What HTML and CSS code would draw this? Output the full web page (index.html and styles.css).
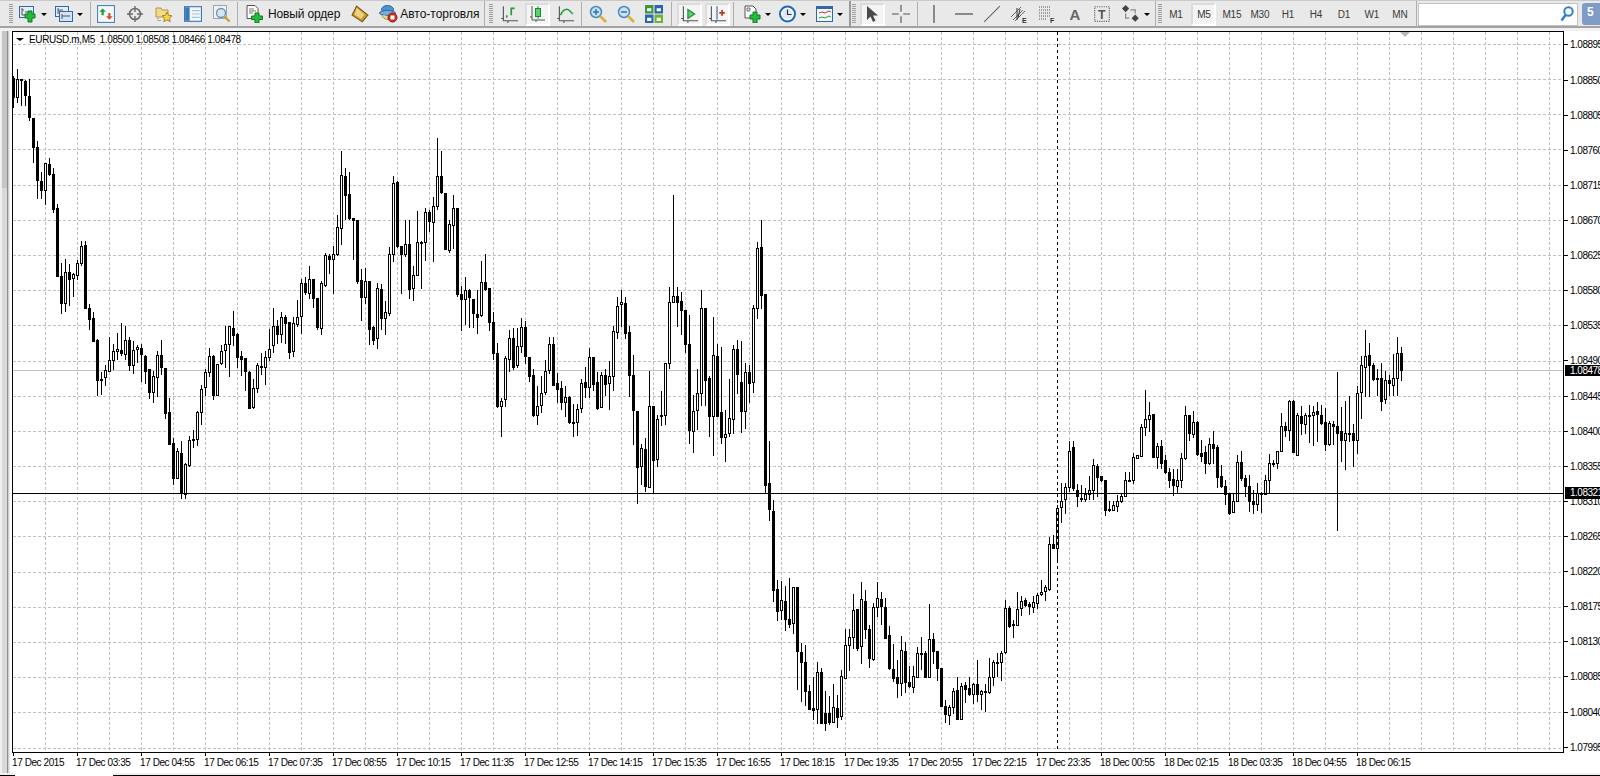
FILE: index.html
```html
<!DOCTYPE html>
<html lang="ru">
<head>
<meta charset="utf-8">
<title>EURUSD.m,M5</title>
<link rel="stylesheet" href="styles.css">
</head>
<body>
<header class="toolbar">
  <span class="grip g1"></span>
  <button class="btn split s1"><svg class="ic" viewBox="0 0 18 18"><rect x=".5" y="1.5" width="14" height="11" fill="#e3edf8" stroke="#2f6aa6"/><path d="M3 3v7h5M3 5h2M6 7h3" fill="none" stroke="#555"/><path d="M9 6h4v3h3v4h-3v4H9v-4H6V9h3z" fill="#27b83c" stroke="#0b7d22"/></svg><i class="arrow"></i></button>
  <button class="btn split s2"><svg class="ic" viewBox="0 0 18 18"><rect x=".5" y="1.5" width="13" height="10" fill="#e3edf8" stroke="#2f6aa6"/><rect x="4.5" y="6.5" width="13" height="10" fill="#d3e2f4" stroke="#2f6aa6"/><path d="M3 3v6M3 5h5M7 9v5M7 11h8" fill="none" stroke="#555"/></svg><i class="arrow"></i></button>
  <span class="sep sa"></span>
  <button class="btn b29"><svg class="ic" viewBox="0 0 16 16"><rect x=".5" y=".5" width="15" height="15" fill="#f6f9fc" stroke="#4f87bd"/><path d="M5 3l3 3H6v3H4V6H2z" fill="#1f9e35"/><path d="M11 13l-3-3h2V7h2v3h2z" fill="#d9502c"/></svg></button>
  <button class="btn b29"><svg class="ic" viewBox="0 0 18 18"><circle cx="9" cy="9" r="5.5" fill="none" stroke="#6b6b6b" stroke-width="1.6"/><path d="M9 1v6M9 11v6M1 9h6M11 9h6" stroke="#6b6b6b" stroke-width="1.4"/></svg></button>
  <button class="btn b29"><svg class="ic" viewBox="0 0 18 18"><path d="M1 3h5l1 2h6v7H1z" fill="#f3d98a" stroke="#b8923c"/><path d="M12 7l1.6 3.4 3.4.4-2.5 2.4.7 3.4-3.2-1.7-3.2 1.7.7-3.4L7 10.800l3.400-.4z" fill="#f5d24a" stroke="#a98520"/><path d="M3 13v4M5 15v2" stroke="#666" stroke-dasharray="1 1"/></svg></button>
  <button class="btn b29"><svg class="ic" viewBox="0 0 16 16"><rect x=".5" y="1.500" width="15" height="13" fill="#f4f7fb" stroke="#3a79b5"/><rect x="1" y="2" width="4" height="12" fill="#3a79b5"/><path d="M7 5h7M7 8h7M7 11h7" stroke="#a9bfd6"/></svg></button>
  <button class="btn b29"><svg class="ic" viewBox="0 0 18 18"><rect x=".5" y=".5" width="13" height="13" fill="#eef2f6" stroke="#9aa5b0"/><circle cx="8" cy="8" r="4.500" fill="#d4e4f4" stroke="#6d8fb2" stroke-width="1.300"/><path d="M11.500 11.500l5 5" stroke="#c9a32c" stroke-width="2.400"/></svg></button>
  <span class="sep sb"></span>
  <button class="btn lbl l1"><svg class="ic i17" viewBox="0 0 17 18"><path d="M1 .500h8l3 3v10H1z" fill="#fff" stroke="#555"/><path d="M3 4h5M3 6h7M3 8h4" stroke="#777"/><path d="M9 8h4v3h3.500v3.500H13V18H9v-3.500H5.500V11H9z" fill="#27b83c" stroke="#0b7d22"/></svg><span class="txt order">Новый ордер</span></button>
  <button class="btn lbl l2"><svg class="ic i16" viewBox="0 0 16 16"><path d="M5 1l10 8-5 6-9-6z" fill="#c9962f" stroke="#7d5a12"/><path d="M5 2.500l7 6-3 4-6-4z" fill="#f1d282"/></svg></button>
  <button class="btn lbl l3"><svg class="ic i19" viewBox="0 0 19 18"><ellipse cx="8.500" cy="4.500" rx="6" ry="4" fill="#4a93cf" stroke="#2b6a9e"/><ellipse cx="8.500" cy="8" rx="8" ry="2.500" fill="#6fb0de" stroke="#2b6a9e"/><path d="M3 10c1 5 8 6 11 2" fill="#f0d890" stroke="#b08a35"/><circle cx="13.500" cy="12.500" r="4.500" fill="#d32f1f" stroke="#8b1a10"/><rect x="11.500" y="10.500" width="4" height="4" fill="#fff"/></svg><span class="txt auto">Авто-торговля</span></button>
  <span class="sep sc"></span>
  <span class="grip g2"></span>

  <button class="btn"><svg class="ic" viewBox="0 0 16 16"><path d="M3 1v13h13M1 12h2M7 14v2" fill="none" stroke="#555"/><path d="M6 11V9M10 9V3h3" fill="none" stroke="#1f9e35" stroke-width="1.500"/></svg></button>
  <button class="btn on"><svg class="ic" viewBox="0 0 16 18"><path d="M3 1v14h13M1 12h2M7 15v2" fill="none" stroke="#555"/><path d="M9 1v13" stroke="#1f9e35"/><rect x="6.500" y="3.500" width="5" height="8" fill="#5ad26e" stroke="#1c8a31"/></svg></button>
  <button class="btn"><svg class="ic" viewBox="0 0 16 16"><path d="M3 1v13h13M1 12h2M7 14v2" fill="none" stroke="#555"/><path d="M4 9c2-5 6-7 9-3l2 2" fill="none" stroke="#1f9e35" stroke-width="1.300"/></svg></button>
  <span class="sep sd"></span>
  <button class="btn"><svg class="ic" viewBox="0 0 18 18"><circle cx="7" cy="7" r="5.500" fill="#c8e1f5" stroke="#4a87ba" stroke-width="1.500"/><path d="M4 7h6M7 4v6" stroke="#2e75ad" stroke-width="1.500"/><path d="M11 11l6 6" stroke="#d6b23e" stroke-width="2.600"/></svg></button>
  <button class="btn"><svg class="ic" viewBox="0 0 18 18"><circle cx="7" cy="7" r="5.500" fill="#c8e1f5" stroke="#4a87ba" stroke-width="1.500"/><path d="M4 7h6" stroke="#2e75ad" stroke-width="1.500"/><path d="M11 11l6 6" stroke="#d6b23e" stroke-width="2.600"/></svg></button>
  <button class="btn"><svg class="ic" viewBox="0 0 17 17"><rect width="8" height="8" fill="#3d9a3a"/><rect x="9" width="8" height="8" fill="#2d63b4"/><rect y="9" width="8" height="8" fill="#2d63b4"/><rect x="9" y="9" width="8" height="8" fill="#6bb534"/><path d="M2 3h4v3H2zM11 3h4v3h-4zM2 12h4v3H2zM11 12h4v3h-4z" fill="#fff"/></svg></button>
  <span class="sep se"></span>
  <button class="btn on"><svg class="ic" viewBox="0 0 16 16"><path d="M3 1v13h13M1 12h2M7 14v2" fill="none" stroke="#555"/><path d="M7 4l6 4-6 4z" fill="#5ad26e" stroke="#1c8a31"/></svg></button>
  <button class="btn on"><svg class="ic" viewBox="0 0 16 16"><path d="M3 1v13h13M1 12h2M7 14v2" fill="none" stroke="#555"/><path d="M8 1v12" stroke="#2e6aa5"/><path d="M10 7h5M12.500 4.500v5" stroke="#c5371d" stroke-width="1.600"/></svg></button>
  <span class="sep sf"></span>
  <button class="btn split s3"><svg class="ic" viewBox="0 0 16 18"><path d="M1 1h8l3 3v9H1z" fill="#fff" stroke="#555"/><path d="M3 3h3v3H3z" fill="#ddd" stroke="#777"/><path d="M9 7h4v3h3v4h-3v4H9v-4H6v-4h3z" fill="#27b83c" stroke="#0b7d22"/></svg><i class="arrow"></i></button>
  <button class="btn split s4"><svg class="ic i17" viewBox="0 0 17 17"><circle cx="8.500" cy="8.500" r="7.500" fill="#fff" stroke="#1d6bb8" stroke-width="2"/><circle cx="8.500" cy="8.500" r="5" fill="#dfeaf5"/><path d="M8.500 4v5h4" fill="none" stroke="#333" stroke-width="1.200"/></svg><i class="arrow"></i></button>
  <button class="btn split s5"><svg class="ic i17" viewBox="0 0 17 16"><rect x=".5" y=".5" width="16" height="15" fill="#f3f7fb" stroke="#2f6aa6"/><path d="M1 2h15" stroke="#2f6aa6" stroke-width="2"/><path d="M3 7l3-1 3 1 4-2 2 1" fill="none" stroke="#c5371d"/><path d="M3 12l3-1 3 1 4-2 2 1" fill="none" stroke="#1f9e35"/></svg><i class="arrow"></i></button>
  <span class="sep thick sg"></span>
  <span class="grip g3"></span>

  <button class="btn on cur"><svg class="ic" viewBox="0 0 14 18"><path d="M2 1v14l3.500-3.500L8 17l2.500-1.500L8 10.500h5z" fill="#4a4a4a"/></svg></button>
  <button class="btn cross"><svg class="ic" viewBox="0 0 16 16"><path d="M0 8h6M10 8h6M8 0v6M8 10v6" stroke="#555"/></svg></button>
  <span class="sep sh"></span>
  <button class="btn w33"><svg class="ic" viewBox="0 0 4 14"><path d="M2 0v14" stroke="#555"/></svg></button>
  <button class="btn w25"><svg class="ic" viewBox="0 0 14 4"><path d="M0 2h14" stroke="#555"/></svg></button>
  <button class="btn w29"><svg class="ic" viewBox="0 0 16 16"><path d="M1 15L15 1" stroke="#666"/></svg></button>
  <button class="btn w28"><svg class="ic" viewBox="0 0 18 18"><path d="M1 12L11 2M3 15L13 5M5 16L15 6" stroke="#666"/><path d="M7 3v12M10 4l-2 9" stroke="#333"/><text x="12" y="18" class="small">E</text></svg></button>
  <button class="btn w28"><svg class="ic" viewBox="0 0 18 18"><path d="M1 2h12M1 5h12M1 8h12M1 11h12M1 14h8" stroke="#555" stroke-dasharray="1 1"/><text x="12" y="18" class="small">F</text></svg></button>
  <button class="btn w27 big">A</button>
  <button class="btn w28"><svg class="ic" viewBox="0 0 14 16"><rect x=".5" y="1.500" width="13" height="13" fill="none" stroke="#666" stroke-dasharray="1 1"/><text x="3.500" y="12" class="tee">T</text></svg></button>
  <button class="btn split s6"><svg class="ic" viewBox="0 0 15 15"><path d="M3 0l3 3-3 3-3-3z" fill="#444"/><path d="M11 8l3 3-3 3-3-3z" fill="#444"/><path d="M3 7v4h3M7 4h4v3" fill="none" stroke="#888"/></svg><i class="arrow"></i></button>
  <span class="sep si"></span>
  <span class="grip g4"></span>

  <button class="btn tf">M1</button><button class="btn tf on">M5</button><button class="btn tf">M15</button><button class="btn tf">M30</button><button class="btn tf">H1</button><button class="btn tf">H4</button><button class="btn tf">D1</button><button class="btn tf">W1</button><button class="btn tf">MN</button>
  <span class="sep sj"></span>
  <div class="search"><svg class="lens" viewBox="0 0 14 16"><circle cx="8.500" cy="5.500" r="4.200" fill="#fff" stroke="#2b7fd4" stroke-width="2"/><path d="M5.500 9L1.500 14.500" stroke="#2b7fd4" stroke-width="2.400"/></svg></div>
  <div class="badge">5</div>
</header>

<div class="workspace">
  <aside class="edge"><span class="edge-top"></span><span class="edge-bottom"></span></aside>
  <main class="window">
    <div class="upper">
      <div class="plot">
        <svg id="chart" class="chart" width="1550" height="720"></svg>
        <div class="title"><i class="menu"></i><span>EURUSD.m,M5&nbsp; 1.08500 1.08508 1.08466 1.08478</span></div>
        <i class="shift"></i>
      </div>
      <div class="prices">
        <span class="p">1.08895</span><span class="p">1.08850</span><span class="p">1.08805</span><span class="p">1.08760</span><span class="p">1.08715</span><span class="p">1.08670</span><span class="p">1.08625</span><span class="p">1.08580</span><span class="p">1.08535</span><span class="p">1.08490</span><span class="p">1.08445</span><span class="p">1.08400</span><span class="p">1.08355</span><span class="p">1.08310</span><span class="p">1.08265</span><span class="p">1.08220</span><span class="p">1.08175</span><span class="p">1.08130</span><span class="p">1.08085</span><span class="p">1.08040</span><span class="p">1.07995</span>
        <b class="tag tag-bid">1.08478</b>
        <b class="tag tag-line">1.08321</b>
      </div>
    </div>
    <div class="times">
      <span class="t">17 Dec 2015</span><span class="t">17 Dec 03:35</span><span class="t">17 Dec 04:55</span><span class="t">17 Dec 06:15</span><span class="t">17 Dec 07:35</span><span class="t">17 Dec 08:55</span><span class="t">17 Dec 10:15</span><span class="t">17 Dec 11:35</span><span class="t">17 Dec 12:55</span><span class="t">17 Dec 14:15</span><span class="t">17 Dec 15:35</span><span class="t">17 Dec 16:55</span><span class="t">17 Dec 18:15</span><span class="t">17 Dec 19:35</span><span class="t">17 Dec 20:55</span><span class="t">17 Dec 22:15</span><span class="t">17 Dec 23:35</span><span class="t">18 Dec 00:55</span><span class="t">18 Dec 02:15</span><span class="t">18 Dec 03:35</span><span class="t">18 Dec 04:55</span><span class="t">18 Dec 06:15</span>
    </div>
  </main>
</div>
<footer class="tabs"><span class="tab-gap"></span><span class="tab"></span><span class="tab-rest"></span></footer>
<script src="chart.js"></script>
</body>
</html>
```
FILE: styles.css
```css
* { box-sizing: border-box; }
html, body { margin: 0; height: 776px; overflow: hidden; background: #fff; }
body { display: flex; flex-direction: column; width: 1600px; font-family: "Liberation Sans", Arial, sans-serif; color: #000; }

.toolbar { display: flex; align-items: center; height: 31px; flex: none; padding: 2px 0 3px; background: #e9e9e9; border-top: 1px solid #c9c9c9; border-bottom: 3px solid #f2f2f2; box-shadow: inset 0 -2px 0 #a3a3a3; }
.btn { flex: none; display: flex; align-items: center; justify-content: center; width: 28px; height: 23px; padding: 0; border: 0; background: none; font: 10px "Liberation Sans", Arial, sans-serif; color: #333; }
.btn.on { width: 25px; margin: 0 1.5px; background: #f5f5f5 repeating-conic-gradient(#efefef 0 25%, #fafafa 0 50%) 0 0 / 2px 2px; border: 2px solid #dcdcdc; border-right-color: #fff; border-bottom-color: #fff; }
.ic { display: block; width: 18px; height: 18px; flex: none; }
.i16 { width: 18px; height: 18px; }
.i17 { width: 17px; }
.i19 { width: 19px; }
.arrow { width: 0; height: 0; margin-left: 4px; border: 3px solid transparent; border-top: 3px solid #000; border-bottom: 0; flex: none; }

.grip { flex: none; width: 4px; height: 20px; background: repeating-linear-gradient(#9c9c9c 0 1px, transparent 1px 2px); }
.g1 { margin-left: 9px; }
.g2 { margin: 0 2px 0 4px; }
.g3 { margin: 0 2px 0 1px; }
.g4 { margin: 0 0 0 2px; }
.sep { flex: none; width: 1px; height: 24px; background: #aeaeae; }
.sep.thick { width: 2px; height: 27px; background: #9a9a9a; }
.sa { margin-left: 5px; }
.sb { margin-left: 1px; }
.sc { margin-left: 5px; height: 27px; }
.sd { margin: 0 2px 0 2px; }
.se { margin: 0 3px 0 3px; }
.sf { margin: 0 4px 0 2px; }
.sg { margin: 0 0 0 3px; }
.sh { margin-left: 1px; }
.si { margin-left: 3.500px; height: 27px; }
.sj { margin: 0 1px 0 2px; height: 27px; }

.split { justify-content: flex-start; }
.s1 { width: 36px; padding-left: 6px; }
.s2 { width: 36px; padding-left: 6px; }
.s3 { width: 36px; padding-left: 5px; }
.s4 { width: 36px; padding-left: 5px; }
.s5 { width: 36px; padding-left: 6px; }
.s6 { width: 29px; padding-left: 0; margin-left: 6px; }
.b29 { width: 29px; }
.lbl { justify-content: flex-start; width: auto; }
.l1 { padding-left: 8px; }
.l2 { margin-left: 11px; }
.l3 { margin-left: 10px; }
.txt { font-size: 12px; color: #111; white-space: nowrap; }
.order { margin-left: 5px; letter-spacing: -.15px; }
.auto { margin-left: 2px; }
.cur { margin-left: 0; }
.cross { width: 30px; }
.w33 { width: 30px; margin-left: 1px; }
.w25 { width: 29px; }
.w29 { width: 27px; }
.w28 { width: 28px; }
.w27 { width: 27px; }
.big { font-size: 15px; font-weight: bold; color: #666; }
.small { font: bold 7px "Liberation Sans", sans-serif; fill: #333; }
.tee { font: bold 11px "Liberation Sans", sans-serif; fill: #555; }
.tf { font-size: 10px; letter-spacing: -.2px; color: #3a3a3a; }
.tf.on { color: #333; }

.search { flex: none; display: flex; align-items: center; justify-content: flex-end; width: 160px; height: 23px; padding-right: 3px; background: #fff; border: 1px solid #c2c2c2; }
.lens { width: 14px; height: 16px; }
.badge { flex: none; width: 18px; height: 22px; margin-left: 4px; padding-left: 5px; font: bold 12px/18px "Liberation Sans", sans-serif; color: #fff; background: #7f9cc6; border-radius: 3px 0 0 3px; }

.workspace { flex: none; height: 742px; display: flex; }
.edge { flex: none; width: 10px; display: flex; flex-direction: column; }
.edge-top { height: 157px; background: linear-gradient(90deg, #f0f0f0 0 2px, #c6c6c6 2px 7px, #8d8d8d 7px 8px, #cfcfcf 8px 9px, #e8e8e8 9px); }
.edge-bottom { flex: 1; background: linear-gradient(90deg, #f0f0f0 0 2px, #d9d9d9 2px 7px, #8d8d8d 7px 8px, #cfcfcf 8px 9px, #e8e8e8 9px); }

.window { flex: 1; min-width: 0; display: flex; flex-direction: column; padding-left: 2px; background: #fff; }
.upper { flex: none; height: 722px; display: flex; }
.plot { position: relative; flex: none; width: 1552px; height: 722px; border: 1px solid #000; }
.chart { display: block; }
.title { position: absolute; left: 3px; top: 1px; display: flex; align-items: center; height: 12px; font-size: 10px; letter-spacing: -.38px; white-space: nowrap; color: #000; }
.menu { width: 0; height: 0; margin-right: 5px; border: 4px solid transparent; border-top: 3px solid #000; border-bottom: 0; }
.shift { position: absolute; left: 1387px; top: 0; width: 0; height: 0; border: 5px solid transparent; border-top: 5px solid #b8b8b8; border-bottom: 0; }

.prices { position: relative; flex: 1; min-width: 0; display: flex; flex-direction: column; gap: 23.190px; padding-top: 8px; overflow: hidden; }
.p { display: flex; align-items: center; height: 12px; font-size: 10px; letter-spacing: -.5px; white-space: nowrap; }
.p::before { content: ""; flex: none; width: 4px; height: 1px; margin-right: 2px; background: #000; }
.tag { position: absolute; left: 1px; width: 40px; height: 11px; padding-left: 5px; font: 10px/11px "Liberation Sans", sans-serif; letter-spacing: -.5px; color: #fff; background: #000; }
.tag-bid { top: 334px; }
.tag-line { top: 456px; height: 12px; line-height: 12px; }

.times { flex: none; height: 20px; display: flex; }
.t { flex: none; width: 64px; font-size: 10px; letter-spacing: -.42px; text-indent: -.7px; white-space: nowrap; }
.t::before { content: ""; display: block; width: 1px; height: 3px; margin: 0 0 1px 1px; background: #000; }

.tabs { flex: none; height: 3px; display: flex; padding-left: 0; background: #f0f0f0; }
.tab-gap { width: 15px; border-bottom: 1px solid #000; }
.tab { width: 98px; background: #fff; }
.tab-rest { flex: 1; border-bottom: 1px solid #000; }
```
FILE: chart.js
```js
// Candle data: high, bodyTop, bodyBottom, low (reference zoom units), filled flag
var S = [
 {oy:60, c:[
 [50,55,112,143,1],[27,58,112,128,0],[58,58,62,135,1],[60,64,107,137,1],[58,108,173,182,1],[174,176,263,308,1],[243,262,360,414,1],[336,363,392,414,1],[310,310,392,432,0],[294,312,342,345,1],[325,343,447,456,1],[433,445,650,650,1],
 [610,649,731,759,1],[597,637,731,753,0],[612,637,659,735,1],[640,643,656,708,0],[600,610,647,657,0],[544,558,610,617,0],[544,555,746,746,1],[733,744,779,807,1],[757,775,845,845,1],[838,840,960,1005,1],[937,957,962,1003,1],[915,931,953,975,0],
 [832,901,933,935,0],[853,874,901,927,0],[820,868,874,898,0],[790,870,879,885,1],[798,841,884,897,0],[831,841,917,930,1],[843,871,917,939,0],[857,862,869,906,0],[853,865,884,963,1],[885,888,933,969,1],[927,928,998,1014,1],[935,949,998,1026,0],
 [875,886,952,1010,0],[840,885,923,942,1],[925,925,1061,1074,1],[1015,1057,1154,1154,1],[1135,1150,1256,1272,1],[1165,1174,1256,1256,0],[1143,1180,1300,1316,1],[1210,1213,1302,1316,0],[1128,1141,1217,1220,0],[1110,1137,1142,1163,1],[1053,1056,1138,1155,0],[976,988,1058,1092,0],
 [927,936,983,1007,0],[865,889,937,948,0],[885,888,1005,1017,1],[912,913,1005,1007,0],[855,874,910,912,0],[800,853,871,921,0],[798,800,853,950,0],[753,804,827,857,1],[820,823,893,921,1],[873,889,899,945,1],[894,895,935,990,1],[935,937,1044,1046,1],
 [957,985,1043,1044,0],[910,915,986,998,0],[880,919,923,942,1],[873,892,923,972,0],[808,868,893,900,0],[744,799,857,876,0],[782,799,822,850,1],[757,772,824,847,0],[766,772,791,850,1],[787,787,876,894,1],[771,790,875,888,0],[720,772,794,800,0]]},
 {oy:120, c:[
 [478,490,589,641,0],[472,490,518,524,1],[438,478,521,535,0],[478,478,536,563,1],[534,534,623,629,1],[484,490,625,644,0],[400,406,496,500,0],[403,408,419,459,1],[378,403,418,521,0],[285,322,403,405,0],[93,166,325,372,0],[145,168,227,298,1],
 [157,223,296,298,1],[295,295,302,419,1],[300,302,483,489,1],[448,481,533,600,1],[444,484,533,549,0],[484,484,627,674,1],[620,621,660,673,1],[490,505,656,684,0],[492,508,596,627,1],[544,577,596,644,0],[381,403,579,587,0],[169,190,403,425,0],
 [185,187,378,383,1],[378,379,402,521,1],[301,373,402,408,0],[300,373,509,534,1],[438,466,506,540,0],[273,367,466,467,0],[365,366,371,504,1],[265,277,368,421,0],[270,277,303,335,1],[232,259,307,423,0],[55,169,260,267,0],[93,169,218,221,1],
 [220,220,389,389,1],[300,313,392,396,0],[226,265,316,384,0],[265,265,524,530,1],[499,523,539,630,1],[472,511,539,612,0],[507,511,533,621,1],[538,538,581,621,1],[511,583,593,639,1],[423,487,586,590,0],[403,487,508,510,1],[505,505,608,630,1],
 [577,607,701,718,1],[670,700,860,861,1],[835,844,860,950,0],[710,715,838,860,0],[630,655,719,755,0],[625,655,743,747,1],[625,680,737,743,0],[594,622,679,698,0],[605,622,710,730,1],[712,712,770,785,1],[748,767,885,888,1],[800,859,886,912,0],
 [768,821,857,878,0],[720,754,818,823,0],[652,673,752,760,0],[652,673,795,797,1],[760,790,809,846,1],[783,805,848,867,1],[800,832,846,888,0],[830,831,908,910,1],[852,907,908,950,1],[853,868,907,945,0]]},
 {oy:180, c:[
 [598,610,686,698,0],[562,607,623,653,1],[505,532,623,651,0],[531,532,612,632,1],[577,607,684,687,1],[577,586,683,683,0],[568,586,614,645,1],[544,590,611,687,0],[438,454,590,630,0],[352,379,458,476,0],[330,367,373,438,0],[351,370,460,474,1],
 [440,457,587,648,1],[526,586,692,792,1],[694,694,863,971,1],[793,805,860,912,0],[775,808,920,933,1],[574,679,921,922,0],[679,679,842,936,1],[706,718,839,858,0],[633,706,710,735,1],[550,550,707,732,0],[322,367,549,564,0],[45,349,366,368,0],
 [322,349,366,438,1],[338,364,392,462,1],[390,391,494,516,1],[406,493,752,789,1],[645,694,754,816,0],[568,640,692,748,0],[330,385,641,675,0],[384,385,600,675,1],[590,595,710,768,1],[411,526,710,825,0],[492,528,708,710,1],[502,697,773,789,1],
 [690,764,773,843,0],[598,715,761,770,0],[496,508,718,761,0],[481,508,584,640,1],[484,607,695,756,1],[550,577,695,745,0],[556,577,611,667,1],[375,385,608,636,0],[186,205,385,414,0],[120,202,347,386,1],[342,342,917,940,1],[784,910,987,1020,1]]},
 {oy:420, c:[
 [240,273,510,543,1],[480,508,575,600,1],[484,541,571,597,0],[500,543,599,630,1],[475,598,613,623,1],[501,502,611,640,0],[502,502,695,807,1],[670,696,728,845,1],[675,727,815,856,1],[795,814,867,869,1],[771,865,870,897,1],[727,757,869,911,0],
 [745,757,911,911,1],[813,880,911,930,1],[830,880,908,914,1],[793,862,906,907,0],[825,865,893,921,1],[751,769,889,898,0],[628,676,774,775,0],[628,652,677,750,0],[522,571,653,685,0],[568,568,684,690,1],[487,538,680,729,0],[511,544,629,654,1],
 [615,628,716,741,1],[550,562,717,720,0],[487,535,561,588,0],[517,538,560,612,1],[535,562,654,656,1],[618,646,745,748,1],[672,748,776,783,1],[721,772,791,831,1],[648,691,791,825,0],[667,694,788,817,1],[740,787,799,803,1],[740,769,803,816,0],
 [683,700,771,772,0],[652,700,702,749,1],[693,700,771,773,1],[552,658,773,773,0],[640,658,695,729,1],[693,693,746,782,1],[745,745,860,860,1],[840,859,884,906,1],[855,861,887,912,0],[806,814,862,881,0],[772,811,897,899,1],[790,799,899,899,0],
 [786,795,809,846,1],[771,805,822,825,1],[790,794,822,850,0],[720,793,822,845,1],[812,814,824,868,0],[793,814,818,873,1],[715,772,818,820,0],[720,727,772,795,0],[700,726,728,770,0],[693,700,727,780,0],[541,565,698,701,0],[560,565,618,621,1],
 [600,613,617,651,1],[517,568,616,617,0],[530,544,566,585,0],[535,542,555,558,1],[547,552,560,582,1],[530,547,561,576,0],[521,526,551,566,0],[480,517,524,525,0],[495,502,515,540,0],[352,373,507,510,0],[346,373,384,385,1],[255,265,386,425,0],
 [190,244,263,306,0],[190,202,238,280,0],[63,94,201,215,0],[65,83,204,211,1],[193,211,230,258,1]]},
 {oy:320, c:[
 [495,534,539,545,1],[505,522,539,545,0],[468,512,524,537,0],[418,436,512,537,0],[432,439,473,530,1],[468,469,482,485,1],[480,481,570,587,1],[545,568,572,575,1],[545,556,571,572,0],[525,544,560,575,0],[520,529,545,547,0],[457,481,528,530,0],
 [457,481,483,485,0],[400,412,482,490,0],[405,406,415,416,0],[312,322,408,410,0],[210,298,323,345,0],[247,286,298,335,0],[283,283,412,412,1],[370,379,413,445,0],[362,379,429,445,1],[405,421,458,460,1],[445,457,480,503,1],[447,478,497,525,1],
 [447,481,500,520,0],[400,415,481,503,0],[258,286,415,417,0],[285,286,341,362,1],[275,307,342,352,0],[305,307,404,406,1],[360,400,408,425,1],[378,397,431,460,1],[355,373,431,432,0],[333,373,384,430,1],[377,381,471,503,1],[435,468,500,503,1],
 [480,500,524,554,1],[520,521,579,584,1],[520,544,578,578,0],[407,427,544,545,0],[393,427,476,482,1],[465,475,500,528,1],[467,499,545,573,1],[510,544,554,579,1],[490,521,554,570,0],[517,519,522,578,1],[465,481,523,524,0],[403,430,481,520,0],
 [422,430,433,440,1],[393,394,430,444,0],[280,319,394,395,0],[308,319,332,348,1],[240,244,331,360,0],[240,244,398,398,1],[280,286,406,407,0],[260,288,311,342,1],[281,286,314,340,0],[255,285,287,368,1],[260,278,287,375,0],[247,273,284,363,1],
 [255,286,309,312,1],[265,307,372,390,1],[305,309,373,375,0],[305,313,320,372,1],[157,319,341,632,1],[263,334,362,423,1],[245,340,362,449,0],[230,340,343,365,1],[312,340,362,440,1],[200,220,362,400,0],[110,136,217,296,0],[30,110,143,228,0],
 [70,106,136,228,1],[130,136,179,180,1],[148,175,178,227,1],[130,175,245,270,1],[155,181,238,250,0],[165,181,191,225,1],[103,175,197,225,0],[52,100,176,225,0],[82,100,152,180,1]]}
];

var OX = 13, OY = 32; // page position of the svg origin
function r(x, y, w, h, fill) {
  return '<rect x="' + x + '" y="' + y + '" width="' + w + '" height="' + h + '" fill="' + fill + '"/>';
}
var out = '<g shape-rendering="crispEdges">', k, y, x;

// grid
var hd = '', vd = '';
for (k = 0; k <= 20; k++) {
  y = Math.floor(44.3 + 35.19 * k) - OY + 0.5;
  hd += 'M0 ' + y + 'H1550';
}
for (k = 0; k <= 47; k++) {
  x = 45 + 32 * k - OX + 0.5;
  vd += 'M' + x + ' 0V720';
}
out += '<path d="' + hd + vd + '" stroke="#c0c0c0" stroke-dasharray="3 2" fill="none"/>';
// grey bid line
out += r(0, 370 - OY, 1550, 1, '#c0c0c0');

// candles
var i = 0;
S.forEach(function (seg) {
  seg.c.forEach(function (d) {
    var cx = 13 + 4 * i - OX;
    var py = function (z) { return Math.floor(seg.oy + z / 3) - OY; };
    var h = py(d[0]), t = py(d[1]), b = py(d[2]), l = py(d[3]);
    out += r(cx, h, 1, Math.max(1, l - h + 1), '#000');
    var bh = Math.max(2, b - t + 1);
    if (d[4]) {
      out += r(cx - 1, t, 3, bh, '#000');
    } else {
      out += r(cx - 1, t, 3, bh, '#000') + r(cx, t + 1, 1, Math.max(0, bh - 2), '#fff');
    }
    i++;
  });
});

// horizontal black line and dotted vertical line
out += r(0, 493 - OY, 1550, 1, '#000');
out += '<path d="M' + (1057 - OX + 0.5) + ' 0V720" stroke="#000" stroke-dasharray="3 3" fill="none"/>';
out += '</g>';
document.getElementById('chart').innerHTML = out;
```
